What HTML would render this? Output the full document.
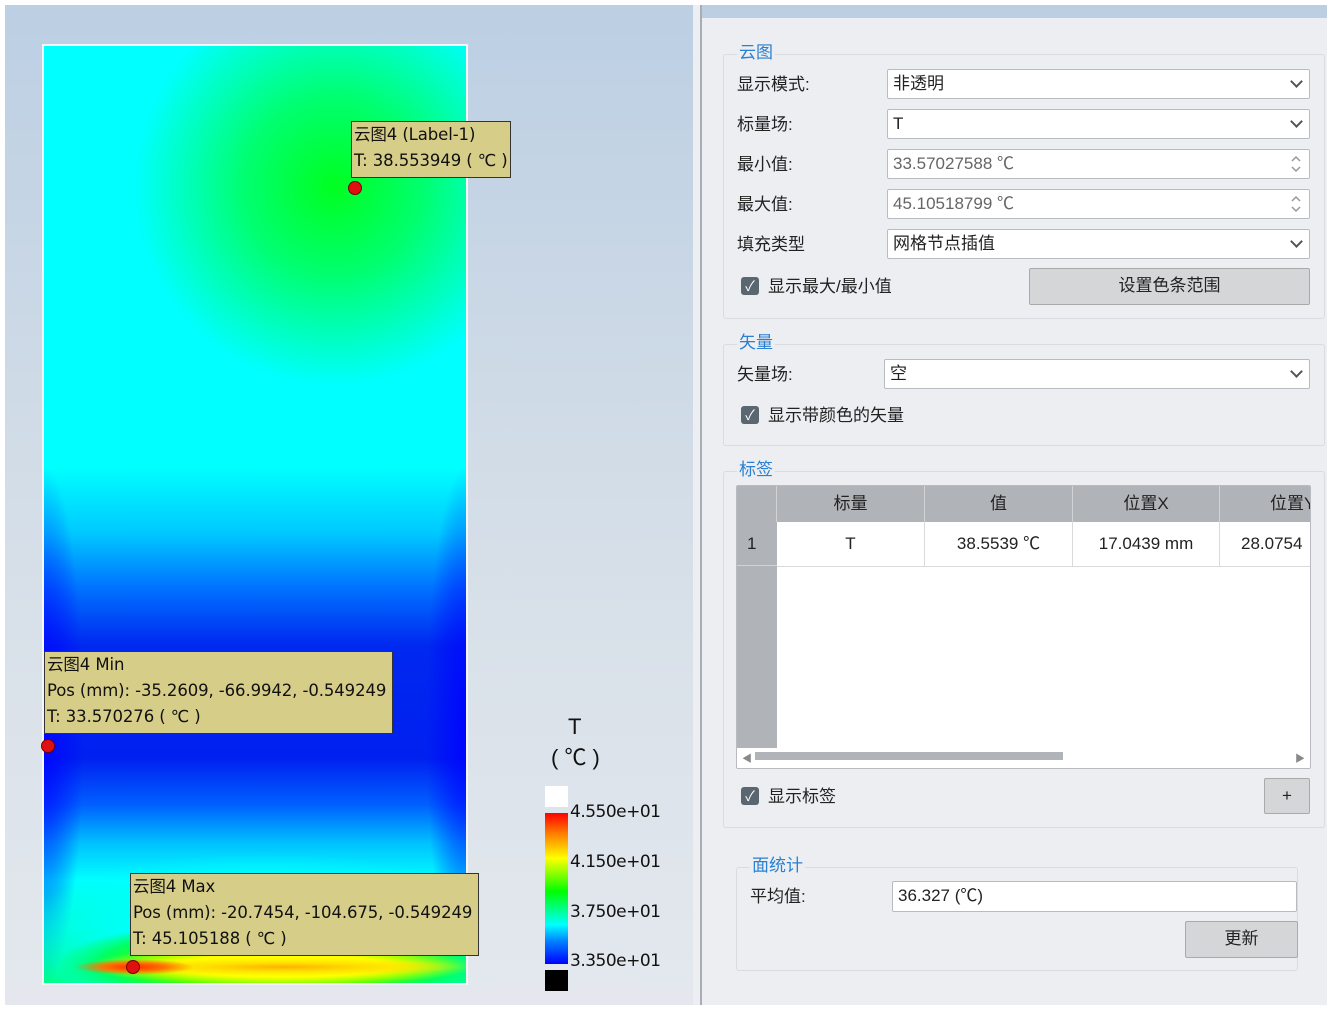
<!DOCTYPE html>
<html><head><meta charset="utf-8"><style>
*{margin:0;padding:0;box-sizing:border-box}
body{width:1343px;height:1018px;background:#fff;position:relative;overflow:hidden;font-family:"Liberation Sans","Noto Sans CJK SC",sans-serif}
.a{position:absolute}
#vp{left:5px;top:5px;width:688px;height:1000px;background:linear-gradient(#bccfe3,#d6dfe8 55%,#e4e8ee)}
#ct{left:44px;top:46px;width:422px;height:937px;outline:2px solid #f4f6fa;overflow:hidden;
background:
linear-gradient(#00ffff 0%,#00ffff 45%,#00c8ff 52%,#0070ff 58%,#0028f0 64%,#0020f0 76%,#0060ff 81%,#00c0ff 85%,#00ffff 89%,#00ffd0 94%,#00ff60 100%)}
.hot{left:0;top:0;width:422px;height:937px;background:
radial-gradient(ellipse 60px 8px at 90px 921px,#ff3000 0%,#ff7000 50%,rgba(255,140,0,0) 100%),
radial-gradient(ellipse 185px 9px at 240px 921px,#ffb000 0%,#ffe000 45%,rgba(255,255,0,0) 100%),
radial-gradient(ellipse 195px 20px at 238px 920px,#ffff00 0%,#ffff00 55%,rgba(255,255,0,0) 100%),
radial-gradient(ellipse 220px 45px at 232px 918px,#c0ff00 0%,#40ff00 55%,#00ff60 80%,rgba(0,255,128,0) 100%),
radial-gradient(ellipse 260px 100px at 220px 905px,rgba(0,255,150,1) 0%,rgba(0,255,255,.9) 55%,rgba(0,255,255,0) 100%),
radial-gradient(ellipse 200px 200px at 290px 140px,#00ff20 0%,#00ff70 45%,rgba(0,255,220,0) 100%)}
.edge{width:40px;height:520px;top:420px}
.lb{background:#d6cd88;border:1.5px solid #333;font-size:16.5px;color:#111;line-height:26px;padding:0 2px;white-space:nowrap;font-family:"DejaVu Sans","Noto Sans CJK SC",sans-serif;letter-spacing:-.1px}
.dot{width:14px;height:14px;border-radius:50%;background:#e01010;border:1px solid #700}
#pn{left:693px;top:5px;width:634px;height:1000px;background:#eceef1;border-left:8px solid #eceef1}
.ln{left:700px;top:5px;width:2px;height:1000px;background:#a8aeb6}
#tb{left:702px;top:5px;width:625px;height:13px;background:#bccfe2}
.grp{border:1.5px solid #d8dbe0;border-radius:3px}
.lg{font-size:17px;color:#2a80d2;background:#eceef1;padding:0 2px;line-height:20px}
.t{font-size:17px;color:#222;line-height:20px;white-space:nowrap}
.in{background:#fff;border:1.5px solid #b8bcc2;border-radius:2px;font-size:17px;color:#222;line-height:27px;padding-left:5px}
.gray{color:#666}
.chev{position:absolute;right:8px;top:7px;width:9px;height:9px;border-right:2px solid #555;border-bottom:2px solid #555;transform:rotate(45deg)}
.cb{width:18px;height:18px;background:#5a6670;border-radius:3px;color:#fff;font-size:14px;line-height:18px;text-align:center}
.btn{background:#d4d6d8;border:1.5px solid #aaa;border-radius:2px;font-size:17px;text-align:center;color:#222}
.th{background:#b0b4b8;font-size:17px;color:#222;text-align:center;line-height:36px;border-right:1px solid #d0d2d4}
.td{font-size:17px;color:#222;text-align:center;line-height:44px;border-right:1px solid #d8dadc;border-bottom:1px solid #d8dadc;background:#fff}
.cl{font-size:17px;color:#111;font-family:"DejaVu Sans",sans-serif;letter-spacing:-.5px}
.sp{position:absolute;right:8px;top:4px;width:10px;height:20px}
</style></head><body>
<div id="vp" class="a"></div>
<div id="ct" class="a">
 <div class="a edge" style="left:0;background:radial-gradient(ellipse 40px 260px at 0 50%,rgba(0,0,255,.85),rgba(0,0,255,0))"></div>
 <div class="a edge" style="right:0;background:radial-gradient(ellipse 40px 260px at 100% 50%,rgba(0,0,255,.85),rgba(0,0,255,0))"></div>
 <div class="a hot"></div>
</div>
<div class="a lb" style="left:351px;top:121px;height:57px;width:160px">云图4 (Label-1)<br>T: 38.553949 ( ℃ )</div>
<div class="a dot" style="left:348px;top:181px"></div>
<div class="a lb" style="left:44px;top:651px;width:349px;height:83px">云图4 Min<br>Pos (mm): -35.2609, -66.9942, -0.549249<br>T: 33.570276 ( ℃ )</div>
<div class="a dot" style="left:41px;top:739px"></div>
<div class="a lb" style="left:130px;top:873px;width:349px;height:83px">云图4 Max<br>Pos (mm): -20.7454, -104.675, -0.549249<br>T: 45.105188 ( ℃ )</div>
<div class="a dot" style="left:126px;top:960px"></div>
<div class="a" style="left:568px;top:714px;font-size:22px;color:#111">T</div>
<div class="a" style="left:551px;top:740px;font-size:22px;color:#111">( ℃ )</div>
<div class="a" style="left:545px;top:786px;width:23px;height:21px;background:#fff"></div>
<div class="a" style="left:545px;top:813px;width:23px;height:151px;background:linear-gradient(#ff0000,#ff8000 14%,#ffff00 30%,#00ff00 52%,#00ffff 74%,#0080ff 85%,#0000ff 100%)"></div>
<div class="a" style="left:545px;top:970px;width:23px;height:21px;background:#000"></div>
<div class="a cl" style="left:570px;top:802px">4.550e+01</div>
<div class="a cl" style="left:570px;top:852px">4.150e+01</div>
<div class="a cl" style="left:570px;top:902px">3.750e+01</div>
<div class="a cl" style="left:570px;top:951px">3.350e+01</div>

<div id="pn" class="a"></div>
<div class="a ln"></div>
<div id="tb" class="a"></div>

<div class="a grp" style="left:723px;top:54px;width:602px;height:265px"></div>
<div class="a lg" style="left:737px;top:43px">云图</div>
<div class="a t" style="left:737px;top:75px">显示模式:</div>
<div class="a in" style="left:887px;top:69px;width:423px;height:30px">非透明<span class="chev"></span></div>
<div class="a t" style="left:737px;top:115px">标量场:</div>
<div class="a in" style="left:887px;top:109px;width:423px;height:30px">T<span class="chev"></span></div>
<div class="a t" style="left:737px;top:155px">最小值:</div>
<div class="a in gray" style="left:887px;top:149px;width:423px;height:30px">33.57027588 ℃<svg class="sp" viewBox="0 0 10 20"><path d="M1 7L5 3L9 7M1 13L5 17L9 13" fill="none" stroke="#999" stroke-width="1.5"/></svg></div>
<div class="a t" style="left:737px;top:195px">最大值:</div>
<div class="a in gray" style="left:887px;top:189px;width:423px;height:30px">45.10518799 ℃<svg class="sp" viewBox="0 0 10 20"><path d="M1 7L5 3L9 7M1 13L5 17L9 13" fill="none" stroke="#999" stroke-width="1.5"/></svg></div>
<div class="a t" style="left:737px;top:235px">填充类型</div>
<div class="a in" style="left:887px;top:229px;width:423px;height:30px">网格节点插值<span class="chev"></span></div>
<div class="a cb" style="left:741px;top:277px">✓</div>
<div class="a t" style="left:768px;top:277px">显示最大/最小值</div>
<div class="a btn" style="left:1029px;top:268px;width:281px;height:37px;line-height:34px">设置色条范围</div>

<div class="a grp" style="left:723px;top:344px;width:602px;height:102px"></div>
<div class="a lg" style="left:737px;top:333px">矢量</div>
<div class="a t" style="left:737px;top:365px">矢量场:</div>
<div class="a in" style="left:884px;top:359px;width:426px;height:30px">空<span class="chev"></span></div>
<div class="a cb" style="left:741px;top:406px">✓</div>
<div class="a t" style="left:768px;top:406px">显示带颜色的矢量</div>

<div class="a grp" style="left:723px;top:471px;width:602px;height:357px"></div>
<div class="a lg" style="left:737px;top:460px">标签</div>
<div class="a" style="left:736px;top:485px;width:575px;height:284px;background:#fff;border:1.5px solid #b8bcc2;border-radius:2px;overflow:hidden">
 <div class="a" style="left:0;top:0;width:40px;height:262px;background:#b0b4b8"></div>
 <div class="a th" style="left:0;top:0;width:40px;height:36px"></div>
 <div class="a th" style="left:40px;top:0;width:148px">标量</div>
 <div class="a th" style="left:188px;top:0;width:148px">值</div>
 <div class="a th" style="left:336px;top:0;width:147px">位置X</div>
 <div class="a th" style="left:483px;top:0;width:120px;text-align:left;padding-left:50px">位置Y</div>
 <div class="a" style="left:0;top:36px;width:40px;height:44px;font-size:17px;line-height:44px;padding-left:10px;color:#222;border-bottom:1px solid #d0d2d4">1</div>
 <div class="a td" style="left:40px;top:36px;width:148px">T</div>
 <div class="a td" style="left:188px;top:36px;width:148px">38.5539 ℃</div>
 <div class="a td" style="left:336px;top:36px;width:147px">17.0439 mm</div>
 <div class="a td" style="left:483px;top:36px;width:100px;text-align:left;padding-left:21px">28.0754</div>
 <div class="a" style="left:18px;top:266px;width:308px;height:8px;background:#b0b4b8"></div>
 <div class="a" style="left:5px;top:264px;font-size:10px;color:#888">◀</div>
 <div class="a" style="left:558px;top:264px;font-size:10px;color:#888">▶</div>
</div>
<div class="a cb" style="left:741px;top:787px">✓</div>
<div class="a t" style="left:768px;top:787px">显示标签</div>
<div class="a btn" style="left:1264px;top:778px;width:46px;height:36px;line-height:34px">+</div>

<div class="a grp" style="left:736px;top:867px;width:562px;height:104px"></div>
<div class="a lg" style="left:750px;top:856px">面统计</div>
<div class="a t" style="left:750px;top:887px">平均值:</div>
<div class="a in" style="left:892px;top:881px;width:405px;height:31px">36.327 (℃)</div>
<div class="a btn" style="left:1185px;top:921px;width:113px;height:37px;line-height:34px">更新</div>
</body></html>
